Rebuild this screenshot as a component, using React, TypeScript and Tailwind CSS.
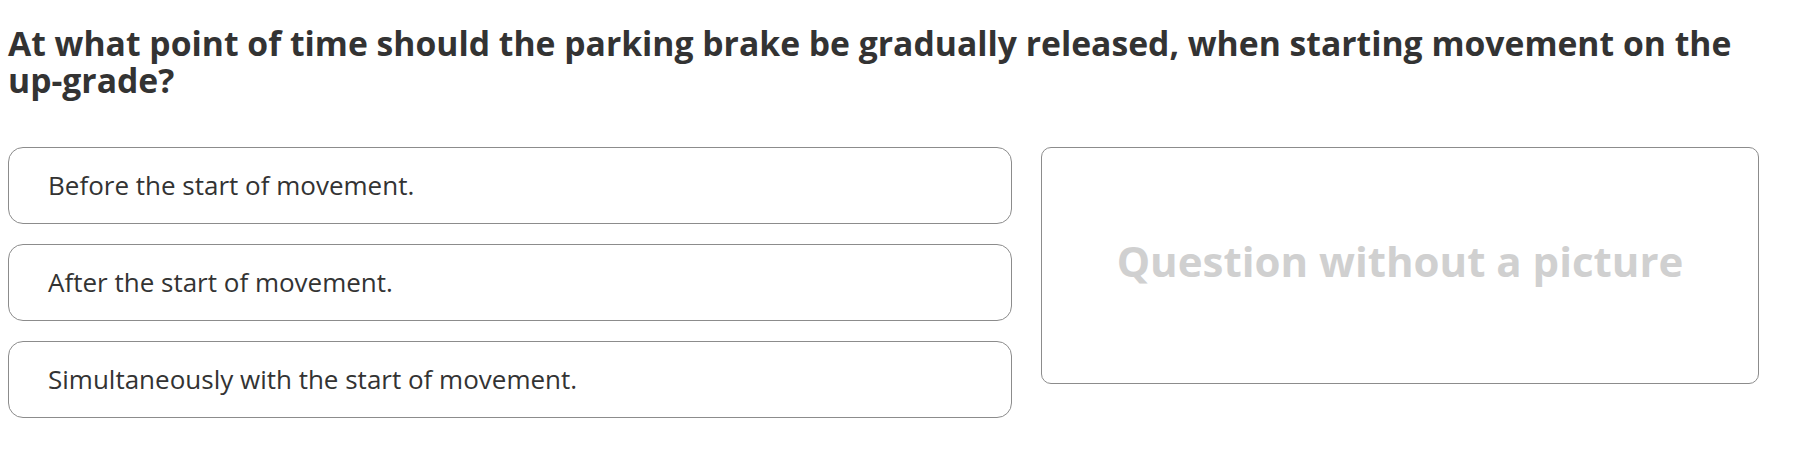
const options = [
  "Before the start of movement.",
  "After the start of movement.",
  "Simultaneously with the start of movement.",
];

export default function App() {
  return (
    <div className="w-[1797px] h-[456px] bg-white px-2 pt-[25px] font-['Open_Sans',sans-serif] text-[#333]">
      <h1 className="text-[33.7px] font-bold leading-[37px] pr-[20px]">
        At what point of time should the parking brake be gradually released, when starting movement on the{" "}
        <span className="whitespace-nowrap">up-grade?</span>
      </h1>

      <div className="mt-[48px] flex gap-[29px]">
        {/* answers */}
        <div className="w-[1004px] flex flex-col gap-[20px]">
          {options.map((o) => (
            <button
              key={o}
              className="h-[77px] w-full text-left pl-[39px] border border-[#8c8c8c] rounded-[15px] text-[26px] bg-white"
            >
              {o}
            </button>
          ))}
        </div>

        {/* picture placeholder */}
        <div className="w-[718px] h-[237px] border border-[#8c8c8c] rounded-[10px] flex items-center justify-center pb-[10px]">
          <span className="text-[42px] font-bold text-[#d0d0d0]">Question without a picture</span>
        </div>
      </div>
    </div>
  );
}
